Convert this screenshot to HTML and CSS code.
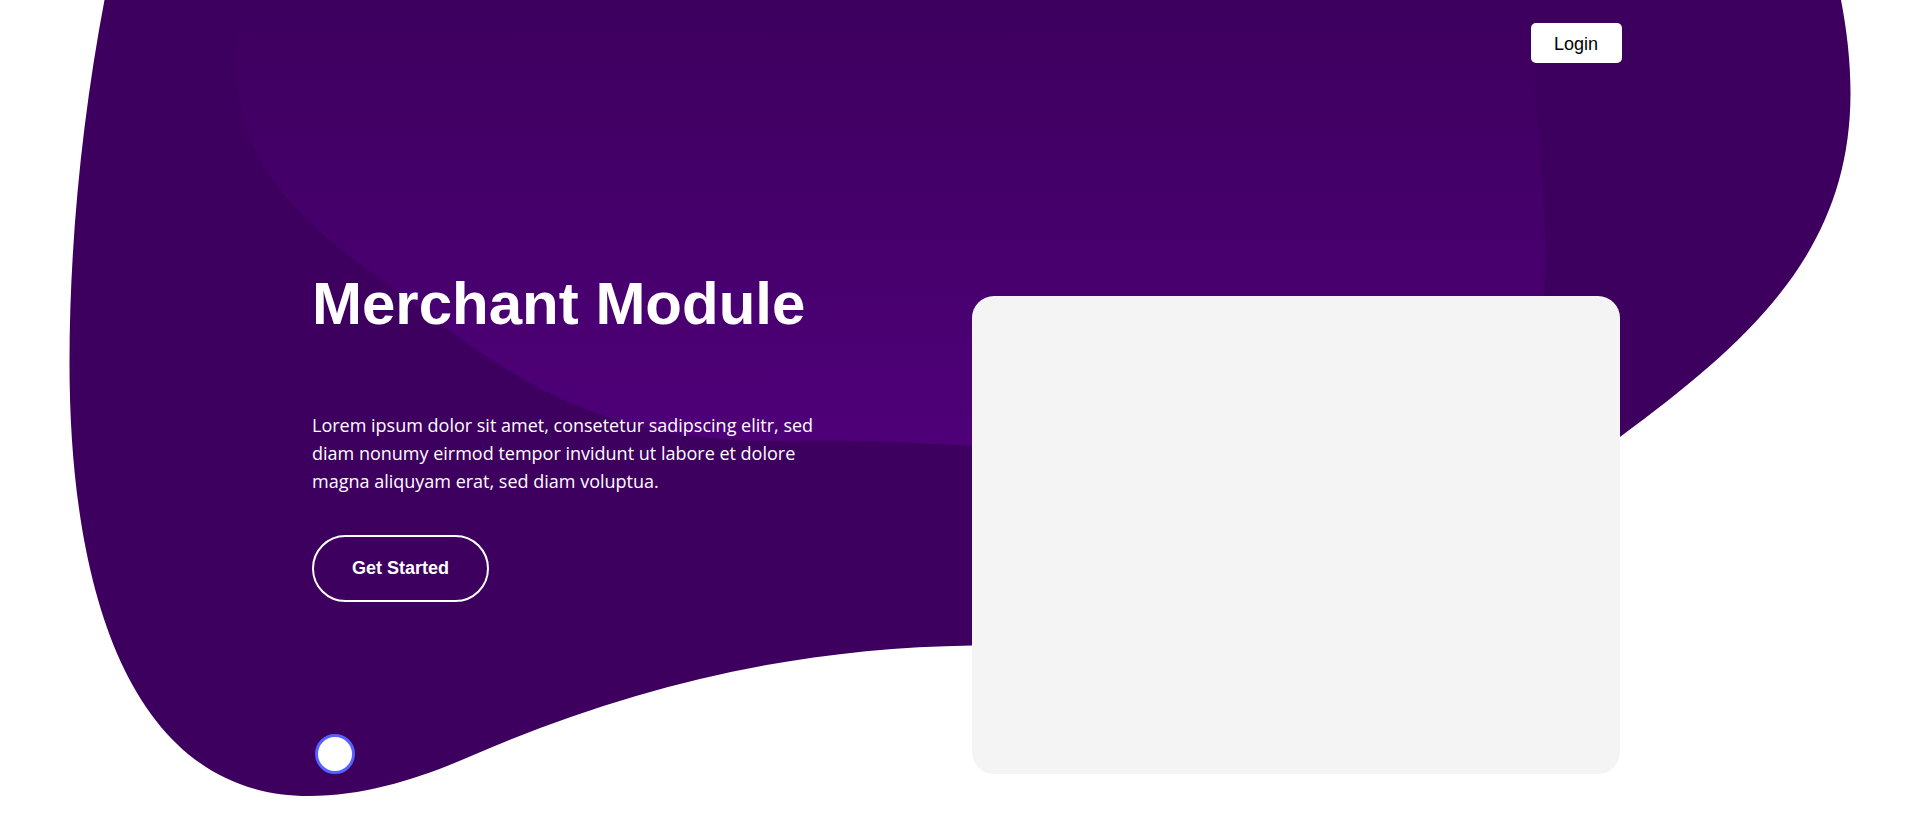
FILE: index.html
```html
<!DOCTYPE html>
<html lang="en">
<head>
  <meta charset="utf-8">
  <meta name="viewport" content="width=device-width, initial-scale=1">
  <title>Merchant Module</title>
  <link rel="stylesheet" href="styles.css">
</head>
<body>
  <div class="page">
    <svg class="backdrop" viewBox="0 0 1920 824" aria-hidden="true">
      <defs>
        <linearGradient id="glow" gradientUnits="userSpaceOnUse" x1="0" y1="0" x2="0" y2="460">
          <stop offset="0" stop-color="#3d005e"/>
          <stop offset="1" stop-color="#4f0079"/>
        </linearGradient>
      </defs>
      <path fill="#3d005e" d="M104.500 0C82 118 69.500 245 69.500 363C69.500 600 135 796 309 796C367 796 423 777 473.500 755C640 683 800 648 972 645.500C1250 642 1440 568 1620 437C1748 342 1850.500 253 1850.500 93C1850.500 62 1847 31 1841 0Z"/>
      <path fill="url(#glow)" d="M245 0C236 30 234 45 235 62C237 195 345 250 441 324C560 415 650 441 780 441C850 440 910 442 972 446C1250 460 1520 450 1544 296C1550 200 1533 120 1531 0Z"/>
    </svg>

    <header class="topbar">
      <button class="login" type="button">Login</button>
    </header>

    <main class="hero">
      <section class="intro">
        <h1 class="title">Merchant Module</h1>
        <p class="lead">Lorem ipsum dolor sit amet, consetetur sadipscing elitr, sed diam nonumy eirmod tempor invidunt ut labore et dolore magna aliquyam erat, sed diam voluptua.</p>
        <a class="cta" href="#start">Get Started</a>
        <span class="dot" aria-hidden="true"></span>
      </section>
      <div class="panel"></div>
    </main>
  </div>
</body>
</html>
```

FILE: styles.css
```css
* {
  box-sizing: border-box;
}

body {
  margin: 0;
  background: #fff;
  font-family: "Liberation Sans", Arial, sans-serif;
  font-size: 18px;
}

.page {
  position: relative;
  min-height: 100vh;
}

.backdrop {
  position: absolute;
  top: 0;
  left: 0;
  z-index: -1;
  display: block;
  width: 100%;
}

.topbar {
  display: flex;
  justify-content: flex-end;
  max-width: 1324px;
  margin: 0 auto;
  padding-top: 23px;
}

.login {
  height: 40px;
  padding: 2px 24px 0 23px;
  border: 0;
  border-radius: 5px;
  background: #fff;
  color: #000;
  font: inherit;
}

.hero {
  display: grid;
  grid-template-columns: 660fr 648fr;
  align-items: end;
  max-width: 1320px;
  margin: 0 auto;
  padding: 205px 0 48px 12px;
}

.intro {
  display: flex;
  flex-direction: column;
  align-items: flex-start;
}

.title {
  margin: 0 0 71px;
  color: #fff;
  font-size: 60px;
  font-weight: 700;
  line-height: 72px;
}

.lead {
  max-width: 520px;
  margin: 0 0 40px;
  color: #fff;
  font-family: "Open Sans", sans-serif;
  line-height: 28px;
}

.cta {
  padding: 20px 38px;
  border: 2px solid #fff;
  border-radius: 35px;
  color: #fff;
  font-weight: 700;
  line-height: 23px;
  text-decoration: none;
}

.dot {
  width: 40px;
  height: 40px;
  margin: 132px 0 0 3px;
  border: 3px solid #5562ff;
  border-radius: 50%;
  background: #fff;
}

.panel {
  aspect-ratio: 648 / 478;
  border-radius: 22px;
  background: #f4f4f4;
}
```
